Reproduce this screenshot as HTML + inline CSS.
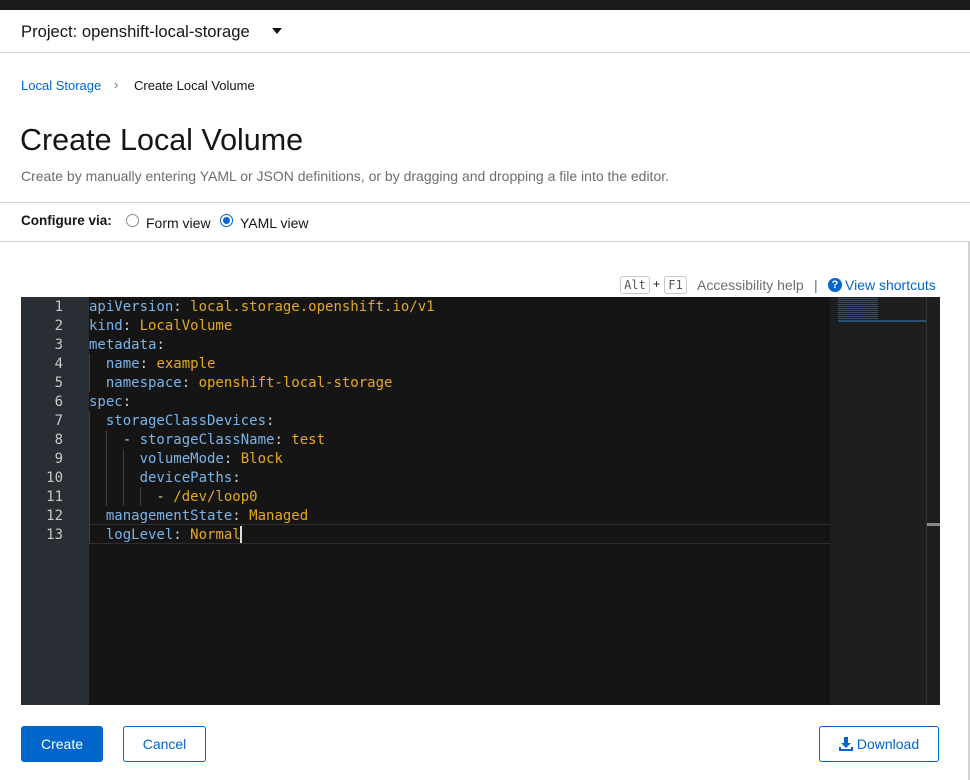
<!DOCTYPE html>
<html><head><style>
*{box-sizing:border-box;margin:0;padding:0}
body{width:970px;height:780px;background:#fff;font-family:"Liberation Sans",sans-serif;position:relative;overflow:hidden;color:#151515}
.abs{position:absolute}
.code{font-family:"DejaVu Sans Mono","Liberation Mono",monospace;font-size:14px;line-height:19px;white-space:pre}
.k{color:#79b4e8}.v{color:#e5a823}.p{color:#cfcfcf}
.ln{color:#c8c8c8;text-align:right;width:42px}
.btn{position:absolute;top:726px;height:36px;border-radius:3px;font-size:14px;display:flex;align-items:center;justify-content:center}
</style></head><body>
<div class="abs" style="left:0;top:0;width:970px;height:10px;background:#1b1b1b"></div>
<div class="abs" style="left:21px;top:22px;font-size:16.6px;color:#151515">Project: openshift-local-storage</div>
<div class="abs" style="left:272px;top:28px;width:0;height:0;border-left:5px solid transparent;border-right:5px solid transparent;border-top:6px solid #151515"></div>
<div class="abs" style="left:0;top:52px;width:970px;height:1px;background:#d2d2d2"></div>
<div class="abs" style="left:21px;top:78px;font-size:13px;color:#0066cc">Local Storage</div>
<div class="abs" style="left:114px;top:77px;font-size:13px;color:#6a6e73">›</div>
<div class="abs" style="left:134px;top:78px;font-size:13px;color:#151515">Create Local Volume</div>
<div class="abs" style="left:20px;top:123px;font-size:30.5px;color:#151515">Create Local Volume</div>
<div class="abs" style="left:21px;top:168px;font-size:14px;color:#6a6e73">Create by manually entering YAML or JSON definitions, or by dragging and dropping a file into the editor.</div>
<div class="abs" style="left:0;top:202px;width:970px;height:1px;background:#d2d2d2"></div>
<div class="abs" style="left:21px;top:213px;font-size:13.5px;font-weight:bold">Configure via:</div>
<div class="abs" style="left:126px;top:214px;width:13px;height:13px;border:1px solid #8a8d90;border-radius:50%"></div>
<div class="abs" style="left:146px;top:215px;font-size:14px">Form view</div>
<div class="abs" style="left:220px;top:214px;width:13px;height:13px;border:1px solid #0066cc;border-radius:50%"><div style="margin:2px;width:7px;height:7px;border-radius:50%;background:#0066cc"></div></div>
<div class="abs" style="left:240px;top:215px;font-size:14px">YAML view</div>
<div class="abs" style="left:0;top:241px;width:970px;height:1px;background:#d2d2d2"></div>
<div class="abs" style="left:968px;top:241px;width:2px;height:539px;background:#d2d2d2"></div>
<div class="abs" style="left:620px;top:276px;width:30px;height:18px;border:1px solid #c8c8c8;border-radius:3px;font-family:'DejaVu Sans Mono',monospace;font-size:12px;color:#555;text-align:center;line-height:16px">Alt</div>
<div class="abs" style="left:653px;top:277px;font-size:12px">+</div>
<div class="abs" style="left:664px;top:276px;width:23px;height:18px;border:1px solid #c8c8c8;border-radius:3px;font-family:'DejaVu Sans Mono',monospace;font-size:12px;color:#555;text-align:center;line-height:16px">F1</div>
<div class="abs" style="left:697px;top:277px;font-size:14px;color:#6a6e73">Accessibility help</div>
<div class="abs" style="left:814px;top:277px;font-size:14px;color:#6a6e73">|</div>
<div class="abs" style="left:828px;top:278px;width:14px;height:14px;border-radius:50%;background:#0066cc;color:#fff;font-size:11px;font-weight:bold;text-align:center;line-height:14px">?</div>
<div class="abs" style="left:845px;top:277px;font-size:14px;color:#0066cc">View shortcuts</div>
<!-- editor -->
<div class="abs" style="left:21px;top:297px;width:919px;height:408px;background:#151515"></div>
<div class="abs" style="left:21px;top:297px;width:68px;height:408px;background:#292e34"></div>
<div class="abs" style="left:830px;top:297px;width:96px;height:408px;background:#1e1e1e"></div>
<div class="abs" style="left:926px;top:297px;width:14px;height:408px;background:#1e1e1e;border-left:1px solid #333"></div>
<div class="abs" style="left:927px;top:523px;width:13px;height:3px;background:#888"></div>
<div class="abs" style="left:838px;top:320px;width:88px;height:2px;background:#264f78"></div>
<div class="abs" style="left:838px;top:298px;width:40px;height:22px;background:repeating-linear-gradient(#4a6f96 0 1px,transparent 1px 2px);opacity:.6"></div>
<div class="abs" style="left:89px;top:524px;width:741px;height:20px;border-top:1px solid #2e2e2e;border-bottom:1px solid #2e2e2e"></div>
<div class="abs" style="left:89px;top:354px;width:1px;height:38px;background:#404040"></div>
<div class="abs" style="left:89px;top:411px;width:1px;height:133px;background:#404040"></div>
<div class="abs" style="left:106px;top:430px;width:1px;height:76px;background:#404040"></div>
<div class="abs" style="left:123px;top:449px;width:1px;height:57px;background:#404040"></div>
<div class="abs" style="left:140px;top:487px;width:1px;height:19px;background:#404040"></div>
<div class="abs code ln" style="left:21px;top:298px">1
2
3
4
5
6
7
8
9
10
11
12
13</div>
<div class="abs code p" style="left:89px;top:298px"><span class="k">apiVersion</span>: <span class="v">local.storage.openshift.io/v1</span>
<span class="k">kind</span>: <span class="v">LocalVolume</span>
<span class="k">metadata</span>:
  <span class="k">name</span>: <span class="v">example</span>
  <span class="k">namespace</span>: <span class="v">openshift-local-storage</span>
<span class="k">spec</span>:
  <span class="k">storageClassDevices</span>:
    - <span class="k">storageClassName</span>: <span class="v">test</span>
      <span class="k">volumeMode</span>: <span class="v">Block</span>
      <span class="k">devicePaths</span>:
        - <span class="v">/dev/loop0</span>
  <span class="k">managementState</span>: <span class="v">Managed</span>
  <span class="k">logLevel</span>: <span class="v">Normal</span></div>
<div class="abs" style="left:240px;top:526px;width:2px;height:17px;background:#ddd"></div>
<div class="btn" style="left:21px;width:82px;background:#0066cc;color:#fff">Create</div>
<div class="btn" style="left:123px;width:83px;border:1px solid #0066cc;color:#0066cc">Cancel</div>
<div class="btn" style="left:819px;width:120px;border:1px solid #0066cc;color:#0066cc"><svg width="14" height="14" viewBox="0 0 14 14" style="margin-right:4px"><path d="M5 0h4v6h3l-5 5-5-5h3z" fill="#0066cc"/><path d="M0 10h2v2h10v-2h2v4H0z" fill="#0066cc"/></svg>Download</div>
</body></html>
